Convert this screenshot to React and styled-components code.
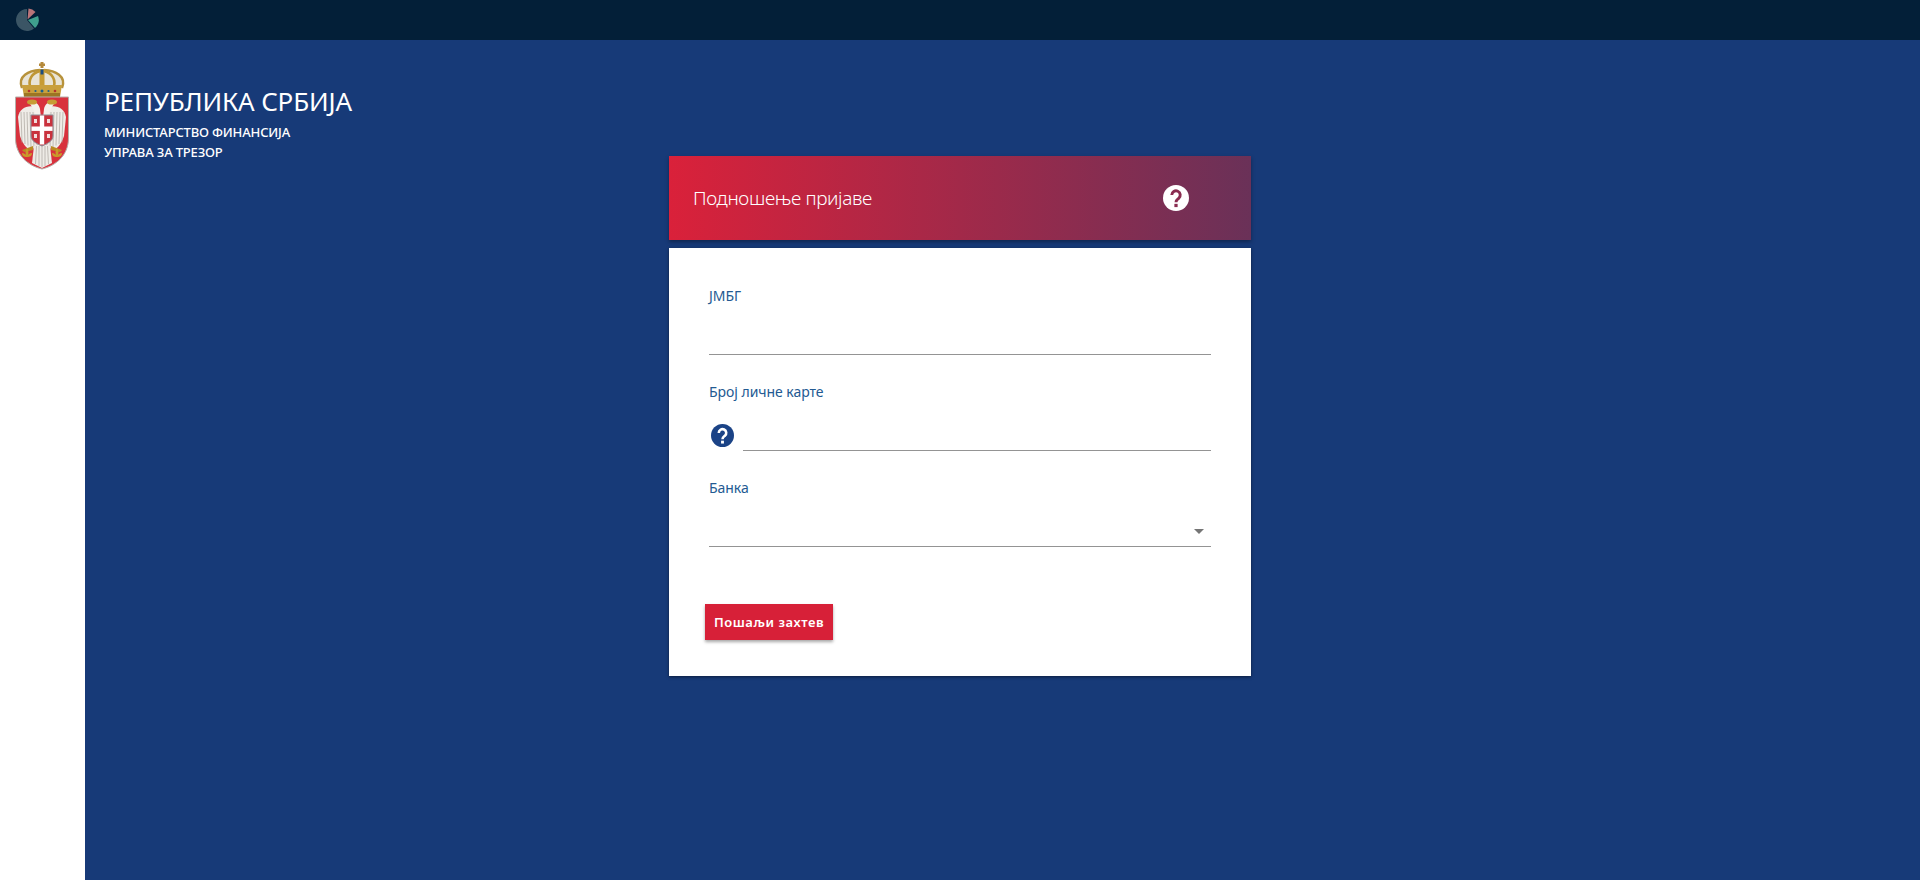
import React from 'react';
import styled, { createGlobalStyle } from 'styled-components';

const Global = createGlobalStyle`
  html, body { margin: 0; padding: 0; height: 100%; }
  body { font-family: "Noto Sans", "Open Sans", sans-serif; background: #173a78; overflow: hidden; }
  #root { height: 100%; }
  * { box-sizing: border-box; }
`;

const Page = styled.div`
  height: 880px;
  display: flex;
  flex-direction: column;
`;

const TopBar = styled.div`
  height: 40px;
  flex: none;
  background: #031f38;
  display: flex;
  align-items: center;
  padding-left: 15px;
`;

const Main = styled.div`
  flex: 1;
  display: flex;
`;

const Side = styled.aside`
  width: 85px;
  flex: none;
  background: #fff;
  padding: 22px 0 0 15px;
`;

const Content = styled.main`
  flex: 1;
  padding: 45px 0 0 19px;
  color: #fff;
`;

const Title = styled.h1`
  margin: 0 0 5px;
  font-size: 26px;
  line-height: 32px;
  font-weight: 400;
  letter-spacing: -0.15px;
`;

const SubTitle = styled.div`
  font-size: 13px;
  line-height: 20px;
  font-weight: 500;
  letter-spacing: -0.17px;
`;

const Column = styled.div`
  width: 582px;
  margin: -6px 0 0 565px;
`;

const Header = styled.div`
  height: 84px;
  background: linear-gradient(90deg, #da213a, #6a3158);
  box-shadow: 0 2px 4px rgba(0, 0, 0, 0.35);
  display: flex;
  align-items: center;
  justify-content: space-between;
  padding: 0 62px 0 24px;
  margin-bottom: 8px;
`;

const HeaderTitle = styled.span`
  font-size: 19px;
  font-weight: 300;
  letter-spacing: -0.35px;
`;

const Card = styled.div`
  height: 428px;
  background: #fff;
  box-shadow: 0 1px 3px rgba(0, 0, 0, 0.5);
  padding: 39px 40px 0;
`;

const Field = styled.div`
  height: 96px;
`;

const Label = styled.label`
  display: block;
  font-size: 14px;
  line-height: 18px;
  color: #235a92;
  letter-spacing: -0.04px;
`;

const InputRow = styled.div`
  display: flex;
  align-items: flex-end;
  gap: 8px;
  height: 50px;
`;

const Line = styled.div`
  flex: 1;
  height: 30px;
  border-bottom: 1px solid #949494;
  display: flex;
  justify-content: flex-end;
  align-items: center;
  padding-right: 7px;
`;

const Caret = styled.span`
  width: 0;
  height: 0;
  border-left: 5px solid transparent;
  border-right: 5px solid transparent;
  border-top: 5px solid #757575;
`;

const HelpWrap = styled.span`
  display: flex;
  width: 26px;
  height: 27px;
  align-items: flex-start;
  justify-content: center;
`;

const Send = styled.button`
  display: block;
  margin: 29px 0 0 -4px;
  width: 128px;
  height: 36px;
  border: 0;
  background: #d72038;
  color: #fff;
  font: 600 13px "Noto Sans", sans-serif;
  letter-spacing: 0.55px;
  box-shadow: 0 2px 3px rgba(0, 0, 0, 0.35);
  padding: 0;
`;

const Help = ({ size, bg, fg }) => (
  <svg width={size} height={size} viewBox="0 0 24 24">
    <circle cx="12" cy="12" r="12" fill={bg} />
    <path d="M8.1 9.3a3.9 3.9 0 1 1 6.4 3c-1.5 1.2-2.5 1.8-2.5 3.6" fill="none" stroke={fg} strokeWidth="2.7" />
    <rect x="10.5" y="17.4" width="3" height="3" fill={fg} />
  </svg>
);

const Logo = () => (
  <svg width="24" height="24" viewBox="0 0 24 24">
    <path d="M12.5 11.5 L13.5 0.5 A11 11 0 0 1 20.5 4 Z" fill="#b97479" />
    <path d="M13 12 L23 8 A11 11 0 0 1 20 20 Z" fill="#3f9f8d" />
    <path d="M12 12 L19 20.5 A11 11 0 1 1 12 1 Z" fill="#3b5565" />
  </svg>
);

const feathers = [5, 8, 11, 14, 17];

const Crest = () => (
  <svg width="54" height="108" viewBox="0 0 54 108">
    <defs>
      <filter id="soft" x="-5%" y="-5%" width="110%" height="110%">
        <feGaussianBlur stdDeviation="0.35" />
      </filter>
    </defs>
    <g filter="url(#soft)">
      {/* crown */}
      <rect x="25.5" y="0" width="3" height="6" fill="#b5893a" />
      <rect x="24" y="1.5" width="6" height="2.5" fill="#b5893a" />
      <path d="M6 26 C1 13 14 8 27 8 C40 8 53 13 48 26 Z" fill="#e9e4d6" />
      <path d="M7 26 C2 14 14 8.5 25 8 M47 26 C52 14 40 8.5 29 8" fill="none" stroke="#b7923b" strokeWidth="2.4" />
      <path d="M16 27 C12 18 17 11 25 9 M38 27 C42 18 37 11 29 9" fill="none" stroke="#bf9736" strokeWidth="2.6" />
      <rect x="24.5" y="7" width="5" height="20" fill="#c79c34" />
      <rect x="25.5" y="7.5" width="3" height="5" fill="#1f4e80" />
      <path d="M7 23 H47 L45 35 H9 Z" fill="#c9a03c" />
      <path d="M9 31 H45 V35 H9 Z" fill="#9c7624" />
      <circle cx="14" cy="29" r="1.3" fill="#b5332f" />
      <circle cx="20.5" cy="29" r="1.1" fill="#1f5f8a" />
      <circle cx="27" cy="29" r="1.5" fill="#1f5f8a" />
      <circle cx="33.5" cy="29" r="1.1" fill="#1f5f8a" />
      <circle cx="40" cy="29" r="1.3" fill="#b5332f" />

      {/* shield */}
      <path d="M0.5 35 H53.5 V76 C53.5 94 40 104 27 107 C14 104 0.5 94 0.5 76 Z" fill="#d8323e" stroke="#b5b0ab" strokeWidth="1" />

      {/* wings */}
      <path d="M24 46 C14 42 5 45 3 55 L5 74 C8 83 13 88 17 88 L24 80 Z" fill="#efece7" />
      <path d="M30 46 C40 42 49 45 51 55 L49 74 C46 83 41 88 37 88 L30 80 Z" fill="#efece7" />
      {feathers.map(d => (
        <g key={d} stroke="#aaa59d" strokeWidth="0.7" fill="none">
          <path d={`M${d + 1} 50 L${d + 2} ${78 + d / 2}`} />
          <path d={`M${53 - d} 50 L${52 - d} ${78 + d / 2}`} />
        </g>
      ))}

      {/* heads */}
      <path d="M15 42 C18 38 24 41 25 47 L26 56 H21 C20 49 18 46 15 42 Z" fill="#f4f1ec" />
      <path d="M39 42 C36 38 30 41 29 47 L28 56 H33 C34 49 36 46 39 42 Z" fill="#f4f1ec" />
      <ellipse cx="17" cy="40" rx="5" ry="2.6" fill="#c79c34" />
      <ellipse cx="37" cy="40" rx="5" ry="2.6" fill="#c79c34" />

      {/* tail */}
      <path d="M19 84 L27 80 L35 84 L37 101 L27 106 L17 101 Z" fill="#eeebe6" />
      <path d="M21.5 84 L20.5 102 M27 82 V105 M32.5 84 L33.5 102 M24 84 V104 M30 84 V104" stroke="#aaa59d" strokeWidth="0.7" />

      {/* legs and lilies */}
      <path d="M18 84 L7 88 L9 90 L18 88 Z M36 84 L47 88 L45 90 L36 88 Z" fill="#b98a24" />
      <path d="M12 86 C14 89 14 92 12 95 C10 92 10 89 12 86 Z M7 91 C9 91 11 92 12 95 C9 95 7 94 7 91 Z M17 91 C15 91 13 92 12 95 C15 95 17 94 17 91 Z" fill="#c99a2a" />
      <path d="M42 86 C44 89 44 92 42 95 C40 92 40 89 42 86 Z M37 91 C39 91 41 92 42 95 C39 95 37 94 37 91 Z M47 91 C45 91 43 92 42 95 C45 95 47 94 47 91 Z" fill="#c99a2a" />

      {/* small shield */}
      <path d="M16 53 H38 V74 C38 79 32 82 27 84 C22 82 16 79 16 74 Z" fill="#c9303c" stroke="#8d8d96" strokeWidth="1" />
      <rect x="24.8" y="53.5" width="4.4" height="29" fill="#fff" />
      <rect x="16.5" y="64.5" width="21" height="4.4" fill="#fff" />
      <path d="M19 57 h3 v4 h-3z M32 57 h3 v4 h-3z M19 72 h3 v4 h-3z M32 72 h3 v4 h-3z" fill="#f2dcdc" />
    </g>
  </svg>
);

const App = () => (
  <Page>
    <Global />
    <TopBar>
      <Logo />
    </TopBar>
    <Main>
      <Side>
        <Crest />
      </Side>
      <Content>
        <Title>РЕПУБЛИКА СРБИЈА</Title>
        <SubTitle>МИНИСТАРСТВО ФИНАНСИЈА</SubTitle>
        <SubTitle>УПРАВА ЗА ТРЕЗОР</SubTitle>
        <Column>
          <Header>
            <HeaderTitle>Подношење пријаве</HeaderTitle>
            <Help size={26} bg="#fff" fg="#8a2c50" />
          </Header>
          <Card>
            <Field>
              <Label>ЈМБГ</Label>
              <InputRow>
                <Line />
              </InputRow>
            </Field>
            <Field>
              <Label>Број личне карте</Label>
              <InputRow>
                <HelpWrap>
                  <Help size={23} bg="#1b4386" fg="#fff" />
                </HelpWrap>
                <Line />
              </InputRow>
            </Field>
            <Field>
              <Label>Банка</Label>
              <InputRow>
                <Line>
                  <Caret />
                </Line>
              </InputRow>
            </Field>
            <Send>Пошаљи захтев</Send>
          </Card>
        </Column>
      </Content>
    </Main>
  </Page>
);

export default App;
